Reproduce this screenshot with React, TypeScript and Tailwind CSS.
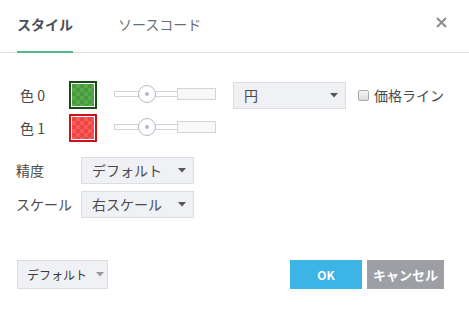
import React from "react";

const font = { fontFamily: '"Noto Sans CJK JP", "Noto Sans", sans-serif' };

function Caret({ color = "#555" }: { color?: string }) {
  return (
    <svg width="8" height="5" viewBox="0 0 8 5">
      <path d="M0 0 L8 0 L4 4.5 Z" fill={color} />
    </svg>
  );
}

function Swatch({ border, a, b }: { border: string; a: string; b: string }) {
  return (
    <div
      className="w-[28px] h-[28px] border-2 p-px bg-white"
      style={{ borderColor: border }}
    >
      <div
        className="w-full h-full"
        style={{
          backgroundColor: a,
          backgroundImage: `linear-gradient(45deg, ${b} 25%, transparent 25%, transparent 75%, ${b} 75%), linear-gradient(45deg, ${b} 25%, transparent 25%, transparent 75%, ${b} 75%)`,
          backgroundSize: "8px 8px",
          backgroundPosition: "0 0, 4px 4px",
        }}
      />
    </div>
  );
}

function Slider() {
  return (
    <div className="relative w-[102px] h-[28px]">
      <div className="absolute left-0 top-[10px] w-[66px] h-[6px] border border-[#d4d4d8] bg-white" />
      <div className="absolute left-[63px] top-[7px] w-[39px] h-[12px] border border-[#d4d4d8] bg-[#f8f8f8]" />
      <div className="absolute left-[24px] top-[4px] w-[18px] h-[18px] rounded-full border border-[#b6b9c6] bg-white flex items-center justify-center">
        <div className="w-[4px] h-[4px] rounded-full bg-[#b6b9c6]" />
      </div>
    </div>
  );
}

function Select({ label, className = "" }: { label: string; className?: string }) {
  return (
    <div
      className={`h-[27px] w-[113px] bg-[#f0f1f5] border border-[#dcdde3] flex items-center justify-between pl-[10px] pr-[7px] text-[14px] text-[#4a4a4a] whitespace-nowrap ${className}`}
    >
      <span>{label}</span>
      <Caret />
    </div>
  );
}

export default function App() {
  return (
    <div className="w-[469px] h-[311px] bg-white flex flex-col" style={font}>
      <div className="h-[53px] border-b border-[#e0e0e0] flex items-stretch relative">
        <div className="ml-[17px] w-[56px] border-b-2 border-[#55b888] -mb-px flex items-center justify-center text-[14px] font-bold text-[#4b4f58] pb-[3px]">
          スタイル
        </div>
        <div className="ml-[45px] flex items-center text-[14px] text-[#6b6e76] pb-[3px]">
          ソースコード
        </div>
        <div className="absolute right-[22px] top-[17px]">
          <svg width="11" height="11" viewBox="0 0 11 11">
            <path d="M1 1 L10 10 M10 1 L1 10" stroke="#8d8d8d" strokeWidth="2" />
          </svg>
        </div>
      </div>

      <div className="flex flex-col gap-[5px] mt-[28px]">
        <div className="flex items-center h-[28px]">
          <span className="ml-[20px] w-[49px] text-[14px] text-[#4a4a4a]">色 0</span>
          <Swatch border="#174a17" a="#4a9a40" b="#58a84c" />
          <div className="ml-[17px]">
            <Slider />
          </div>
          <Select label="円" className="ml-[17px]" />
          <div className="ml-[12px] w-[11px] h-[11px] rounded-[2px] border border-[#a9a9a9] bg-gradient-to-b from-[#f4f4f4] to-[#dcdcdc]" />
          <span className="ml-[5px] text-[14px] text-[#4a4a4a] whitespace-nowrap">価格ライン</span>
        </div>
        <div className="flex items-center h-[28px]">
          <span className="ml-[20px] w-[49px] text-[14px] text-[#4a4a4a]">色 1</span>
          <Swatch border="#c81414" a="#ef4444" b="#f65c5c" />
          <div className="ml-[17px]">
            <Slider />
          </div>
        </div>
      </div>

      <div className="flex flex-col gap-[7px] mt-[15px]">
        <div className="flex items-center">
          <span className="ml-[16px] w-[65px] text-[14px] text-[#4a4a4a]">精度</span>
          <Select label="デフォルト" />
        </div>
        <div className="flex items-center">
          <span className="ml-[16px] w-[65px] text-[14px] text-[#4a4a4a]">スケール</span>
          <Select label="右スケール" />
        </div>
      </div>

      <div className="flex items-center mt-[42px]">
        <div className="ml-[17px] h-[29px] w-[91px] bg-[#f0f1f5] border border-[#dcdde3] flex items-center pl-[9px] gap-[9px] text-[12px] text-[#3a3a3a] whitespace-nowrap">
          <span>デフォルト</span>
          <Caret color="#9a9a9a" />
        </div>
        <div className="ml-auto h-[29px] w-[72px] bg-[#3cb4e5] flex items-center justify-center text-[12px] font-bold text-white">
          OK
        </div>
        <div className="ml-[5px] mr-[25px] h-[29px] w-[77px] bg-[#9d9fa5] flex items-center justify-center text-[13px] font-bold text-white whitespace-nowrap">
          キャンセル
        </div>
      </div>
    </div>
  );
}
